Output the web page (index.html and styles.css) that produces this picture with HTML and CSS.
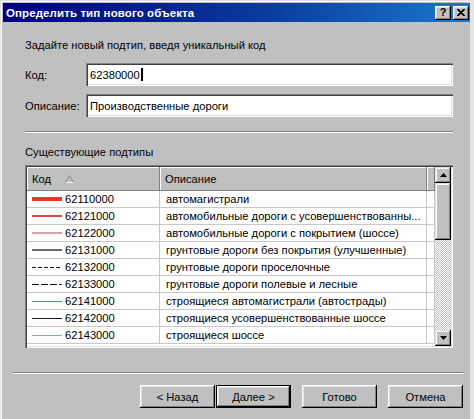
FILE: index.html
```html
<!DOCTYPE html>
<html lang="ru">
<head>
<meta charset="utf-8">
<title>Определить тип нового объекта</title>
<link rel="stylesheet" href="styles.css">
</head>
<body>
<div class="window">
  <div class="titlebar">
    <span class="title">Определить тип нового объекта</span>
    <div class="tbtns">
      <span class="tbtn help">?</span>
      <span class="tbtn close"><svg width="8" height="7" viewBox="0 0 8 7"><path d="M0 0 L7 7 M1 0 L8 7 M7 0 L0 7 M8 0 L1 7" stroke="#000" stroke-width="1.1"/></svg></span>
    </div>
  </div>
  <div class="body">
    <div class="inner">
      <p class="intro">Задайте новый подтип, введя уникальный код</p>
      <div class="field">
        <label class="lbl">Код:</label>
        <div class="input">62380000<span class="caret"></span></div>
      </div>
      <div class="field second">
        <label class="lbl">Описание:</label>
        <div class="input">Производственные дороги</div>
      </div>
      <div class="sep"></div>
      <p class="caption">Существующие подтипы</p>
      <div class="listbox">
        <div class="listmain">
          <div class="header">
            <div class="hcell">Код <svg class="sort" width="9" height="8" viewBox="0 0 9 8"><path d="M4.5 0.5 L8.5 7.5 L0.5 7.5 Z" fill="none" stroke="#8a8a8a" stroke-width="1"/><path d="M1 7.5 L8.5 7.5" stroke="#fff"/></svg></div>
            <div class="hcell">Описание</div>
            <div class="hcell last"></div>
          </div>
          <div class="row">
            <div class="cell code"><svg class="sample" width="30" height="8"><line x1="0" y1="4" x2="30" y2="4" stroke="#e53a22" stroke-width="4"/></svg>62110000</div>
            <div class="cell">автомагистрали</div><div class="cell last"></div>
          </div>
          <div class="row">
            <div class="cell code"><svg class="sample" width="30" height="8"><line x1="0" y1="4" x2="30" y2="4" stroke="#d8493a" stroke-width="2"/></svg>62121000</div>
            <div class="cell">автомобильные дороги с усовершенствованны...</div><div class="cell last"></div>
          </div>
          <div class="row">
            <div class="cell code"><svg class="sample" width="30" height="8"><line x1="0" y1="4" x2="30" y2="4" stroke="#d9a0a6" stroke-width="2"/></svg>62122000</div>
            <div class="cell">автомобильные дороги с покрытием (шоссе)</div><div class="cell last"></div>
          </div>
          <div class="row">
            <div class="cell code"><svg class="sample" width="30" height="8"><line x1="0" y1="4" x2="30" y2="4" stroke="#6a6a6a" stroke-width="2"/></svg>62131000</div>
            <div class="cell">грунтовые дороги без покрытия (улучшенные)</div><div class="cell last"></div>
          </div>
          <div class="row">
            <div class="cell code"><svg class="sample" width="30" height="8"><line x1="0" y1="4.5" x2="30" y2="4.5" stroke="#111" stroke-width="1" stroke-dasharray="4 2"/></svg>62132000</div>
            <div class="cell">грунтовые дороги проселочные</div><div class="cell last"></div>
          </div>
          <div class="row">
            <div class="cell code"><svg class="sample" width="30" height="8"><line x1="0" y1="4.5" x2="30" y2="4.5" stroke="#111" stroke-width="1" stroke-dasharray="7 2"/></svg>62133000</div>
            <div class="cell">грунтовые дороги полевые и лесные</div><div class="cell last"></div>
          </div>
          <div class="row">
            <div class="cell code"><svg class="sample" width="30" height="8"><line x1="0" y1="4.5" x2="30" y2="4.5" stroke="#d0507a" stroke-width="1"/></svg>62141000</div>
            <div class="cell">строящиеся автомагистрали (автострады)</div><div class="cell last"></div>
          </div>
          <div class="row">
            <div class="cell code"><svg class="sample" width="30" height="8"><line x1="0" y1="4.5" x2="30" y2="4.5" stroke="#14143c" stroke-width="1"/></svg>62142000</div>
            <div class="cell">строящиеся усовершенствованные шоссе</div><div class="cell last"></div>
          </div>
          <div class="row">
            <div class="cell code"><svg class="sample" width="30" height="8"><line x1="0" y1="4.5" x2="30" y2="4.5" stroke="#7eaec6" stroke-width="1"/></svg>62143000</div>
            <div class="cell">строящиеся шоссе</div><div class="cell last"></div>
          </div>
        </div>
        <div class="vscroll">
          <div class="sbtn"><svg width="7" height="4" viewBox="0 0 7 4"><path d="M3.5 0 L7 4 L0 4 Z" fill="#000"/></svg></div>
          <div class="thumb"></div>
          <div class="track"></div>
          <div class="sbtn"><svg width="7" height="4" viewBox="0 0 7 4"><path d="M0 0 L7 0 L3.5 4 Z" fill="#000"/></svg></div>
        </div>
      </div>
    </div>
    <div class="sep wide"></div>
    <div class="buttons">
      <button class="btn">&lt; Назад</button>
      <button class="btn default">Далее &gt;</button>
      <button class="btn gap">Готово</button>
      <button class="btn gap">Отмена</button>
    </div>
  </div>
</div>
</body>
</html>
```

FILE: styles.css
```css
* { box-sizing: border-box; }

html, body {
  margin: 0;
  padding: 0;
  background: #e4e4e4;
  font-family: "Liberation Sans", Arial, sans-serif;
  font-size: 11.2px;
  color: #000;
}

.window {
  width: 470px;
  height: 419px;
  padding: 3px 0 0 3px;
  background: #c0c0c0;
  box-shadow: inset 1px 1px #dfdfdf, inset 2px 2px #fff;
  overflow: hidden;
}

.titlebar {
  height: 19px;
  display: flex;
  align-items: center;
  justify-content: space-between;
  padding: 0 1px 0 3px;
  background: linear-gradient(to right, #000080 0%, #0a3a9a 55%, #1a78cc 100%);
}

.title {
  color: #fff;
  font-weight: bold;
  font-size: 11.5px;
  letter-spacing: 0.1px;
}

.tbtns {
  display: flex;
  gap: 2px;
}

.tbtn {
  width: 16px;
  height: 14px;
  background: #c0c0c0;
  box-shadow: inset -1px -1px #000, inset 1px 1px #fff, inset -2px -2px #808080, inset 2px 2px #dfdfdf;
  display: flex;
  align-items: center;
  justify-content: center;
  font-weight: bold;
  font-size: 11px;
  line-height: 1;
}

.body {
  display: flex;
  flex-direction: column;
}

.inner {
  padding: 0 17px 0 22px;
  display: flex;
  flex-direction: column;
}

.intro, .caption {
  margin: 0;
  line-height: 16px;
}

.intro { margin-top: 15px; }

.field {
  display: flex;
  align-items: center;
  margin-top: 10px;
  height: 23px;
}

.field.second { margin-top: 8px; }

.lbl {
  width: 61px;
  flex: none;
}

.input {
  flex: 1;
  height: 23px;
  background: #fff;
  padding: 0 4px;
  display: flex;
  align-items: center;
  box-shadow: inset 1px 1px #808080, inset 2px 2px #404040, inset -1px -1px #fff, inset -2px -2px #dfdfdf;
}

.caret {
  display: inline-block;
  width: 2px;
  height: 13px;
  background: #000;
  margin-left: 1px;
}

.sep {
  height: 2px;
  border-top: 1px solid #808080;
  border-bottom: 1px solid #fff;
  margin-top: 14px;
}

.caption { margin-top: 11px; }

.listbox {
  margin-top: 5px;
  height: 183px;
  padding: 2px;
  background: #fff;
  box-shadow: inset 1px 1px #808080, inset 2px 2px #404040, inset -1px -1px #fff, inset -2px -2px #dfdfdf;
  display: flex;
}

.listmain {
  flex: 1;
  display: flex;
  flex-direction: column;
}

.header, .row {
  display: grid;
  grid-template-columns: 133px 267px 1fr;
}

.header {
  height: 24px;
}

.hcell {
  background: #c0c0c0;
  box-shadow: inset -1px -1px #808080, inset 1px 1px #fff;
  display: flex;
  align-items: center;
  padding-left: 5px;
  padding-bottom: 1px;
}

.sort {
  margin-left: 14px;
}

.row {
  height: 17px;
}

.cell {
  border-right: 1px solid #c8c8c8;
  border-bottom: 1px solid #c8c8c8;
  display: flex;
  align-items: center;
  padding-left: 6px;
  white-space: nowrap;
  overflow: hidden;
}

.cell.code { padding-left: 5px; }

.cell.last { padding: 0; }

.sample {
  margin-right: 3px;
  flex: none;
}

.vscroll {
  width: 16px;
  display: flex;
  flex-direction: column;
}

.sbtn, .thumb {
  background: #c0c0c0;
  box-shadow: inset -1px -1px #000, inset 1px 1px #dfdfdf, inset -2px -2px #808080, inset 2px 2px #fff;
}

.sbtn {
  height: 16px;
  display: flex;
  align-items: center;
  justify-content: center;
}

.thumb { height: 57px; }

.track {
  flex: 1;
  background: repeating-conic-gradient(#fff 0 25%, #c0c0c0 0 50%) 0 0 / 2px 2px;
}

.sep.wide {
  margin: 24px 7px 0 10px;
}

.buttons {
  display: flex;
  justify-content: flex-end;
  margin-top: 11px;
  padding-right: 7px;
}

.btn {
  width: 75px;
  height: 23px;
  font-family: inherit;
  font-size: inherit;
  color: #000;
  background: #c0c0c0;
  border: none;
  padding: 0;
  box-shadow: inset -1px -1px #000, inset 1px 1px #fff, inset -2px -2px #808080, inset 2px 2px #dfdfdf;
}

.btn.default {
  margin-left: 1px;
  box-shadow: inset 0 0 0 1px #000, inset -2px -2px #000, inset 2px 2px #fff, inset -3px -3px #808080, inset 3px 3px #dfdfdf;
}

.btn.gap { margin-left: 11px; }
```
